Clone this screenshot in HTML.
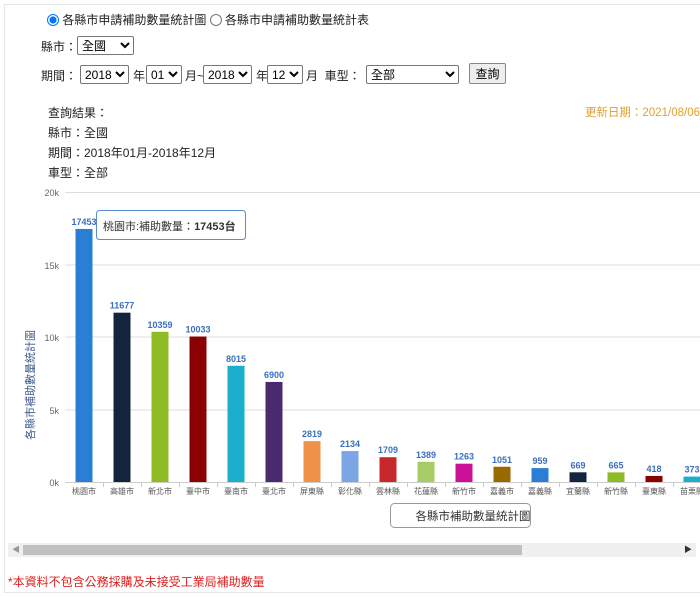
<!DOCTYPE html>
<html><head><meta charset="utf-8"><style>
body{margin:0;width:700px;height:597px;overflow:hidden;background:#fff;font-family:"Liberation Sans","Noto Sans CJK TC",sans-serif;font-size:12px;color:#222;position:relative}
.a{position:absolute;white-space:nowrap}
select{font-family:"Liberation Sans","Noto Sans CJK TC",sans-serif;font-size:12px;height:19px;border:1px solid #777;border-radius:2px;background:#fff;padding:0;position:absolute}
button{position:absolute;font-family:"Liberation Sans","Noto Sans CJK TC",sans-serif;font-size:12px;background:#eee;border:1px solid #888;border-radius:2px;padding:0}
</style></head><body>
<div style="position:absolute;left:4px;top:4px;width:700px;height:587px;border-top:1px solid #e6e6e6;border-left:1px solid #e6e6e6;border-bottom:1px solid #e6e6e6"></div>
<div class="a" style="left:47px;top:11px"><input type="radio" checked style="margin:0;width:12px;height:12px;vertical-align:-2px"> 各縣市申請補助數量統計圖 <input type="radio" style="margin:0;width:12px;height:12px;vertical-align:-2px"> 各縣市申請補助數量統計表</div>
<div class="a" style="left:41px;top:38px">縣市：</div>
<select style="left:77px;top:36px;width:57px"><option>全國</option></select>
<div class="a" style="left:41px;top:67px">期間：</div>
<select style="left:80px;top:65px;width:49px"><option>2018</option></select>
<div class="a" style="left:133px;top:67px">年</div>
<select style="left:146px;top:65px;width:36px"><option>01</option></select>
<div class="a" style="left:185px;top:67px">月~</div>
<select style="left:203px;top:65px;width:49px"><option>2018</option></select>
<div class="a" style="left:256px;top:67px">年</div>
<select style="left:267px;top:65px;width:36px"><option>12</option></select>
<div class="a" style="left:306px;top:67px">月 &nbsp;車型：</div>
<select style="left:366px;top:65px;width:93px"><option>全部</option></select>
<button style="left:469px;top:63px;width:37px;height:21px">查詢</button>
<div class="a" style="left:48px;top:103px;line-height:20px">查詢結果：<br>縣市：全國<br>期間：2018年01月-2018年12月<br>車型：全部</div>
<div class="a" style="right:0;top:104px;color:#e0a030;font-size:11.5px">更新日期：2021/08/06</div>
<svg class="a" style="left:0;top:180px" width="700" height="350" font-family="Liberation Sans,Noto Sans CJK TC,sans-serif">
<g stroke="#ddd" stroke-width="1">
<line x1="65" y1="12.5" x2="700" y2="12.5"/><line x1="65" y1="85" x2="700" y2="85"/><line x1="65" y1="157" x2="700" y2="157"/><line x1="65" y1="230" x2="700" y2="230"/><line x1="65" y1="302.5" x2="700" y2="302.5" stroke="#ccc"/>
</g>
<g font-size="9" fill="#666" text-anchor="end"><text x="59" y="16">20k</text><text x="59" y="89">15k</text><text x="59" y="161">10k</text><text x="59" y="234">5k</text><text x="59" y="306">0k</text></g>
<text transform="translate(34,205) rotate(-90)" font-size="11" fill="#3d5a8a" text-anchor="middle">各縣市補助數量統計圖</text>
<g id="bars" font-size="9" font-weight="bold" fill="#3a6fc0" text-anchor="middle"></g>
<g id="labs" font-size="8" fill="#555" text-anchor="middle"></g>
<rect x="390.5" y="323.5" width="140" height="24" rx="4" fill="#fff" stroke="#999"/>
<text x="473" y="340" font-size="11.5" fill="#333" text-anchor="middle">各縣市補助數量統計圖</text>
<rect x="96.5" y="30.5" width="149" height="29" rx="3" fill="#fff" stroke="#5a8ad0"/>
<text x="103" y="50" font-size="11" fill="#333">桃園市:補助數量：<tspan font-weight="bold">17453台</tspan></text>
</svg>
<div style="position:absolute;left:8px;top:543px;width:688px;height:14px;background:#f0f0f0"></div>
<div style="position:absolute;left:23px;top:545px;width:499px;height:10px;background:#c0c0c0"></div>
<div class="a" style="left:12px;top:544px;font-size:8px;color:#999">◀</div>
<div class="a" style="left:684px;top:544px;font-size:8px;color:#333">▶</div>
<div class="a" style="left:8px;top:573px;color:#e02020">*本資料不包含公務採購及未接受工業局補助數量</div>
<script>
var d=[[17453,"#2a7fd4","桃園市"],[11677,"#13243f","高雄市"],[10359,"#8fbb24","新北市"],[10033,"#8b0000","臺中市"],[8015,"#1aafcc","臺南市"],[6900,"#4a2a6e","臺北市"],[2819,"#f0914a","屏東縣"],[2134,"#7aa6e6","彰化縣"],[1709,"#c8282c","雲林縣"],[1389,"#a6cc66","花蓮縣"],[1263,"#cc1199","新竹市"],[1051,"#9a6a00","嘉義市"],[959,"#2a7fd4","嘉義縣"],[669,"#13243f","宜蘭縣"],[665,"#8fbb24","新竹縣"],[418,"#8b0000","臺東縣"],[373,"#1aafcc","苗栗縣"]];
var ns="http://www.w3.org/2000/svg",b=document.getElementById("bars"),l=document.getElementById("labs");
d.forEach(function(e,i){var cx=84+i*38,h=e[0]*290/20000,y=302-h;
var r=document.createElementNS(ns,"rect");r.setAttribute("x",cx-8.5);r.setAttribute("y",y);r.setAttribute("width",17);r.setAttribute("height",h);r.setAttribute("fill",e[1]);b.appendChild(r);
var t=document.createElementNS(ns,"text");t.setAttribute("x",cx);t.setAttribute("y",y-4);t.textContent=e[0];b.appendChild(t);
var s=document.createElementNS(ns,"text");s.setAttribute("x",cx);s.setAttribute("y",314);s.textContent=e[2];l.appendChild(s);
var k=document.createElementNS(ns,"line");k.setAttribute("x1",cx+19.5);k.setAttribute("x2",cx+19.5);k.setAttribute("y1",302);k.setAttribute("y2",307);k.setAttribute("stroke","#ccc");l.appendChild(k);});
</script>
</body></html>
